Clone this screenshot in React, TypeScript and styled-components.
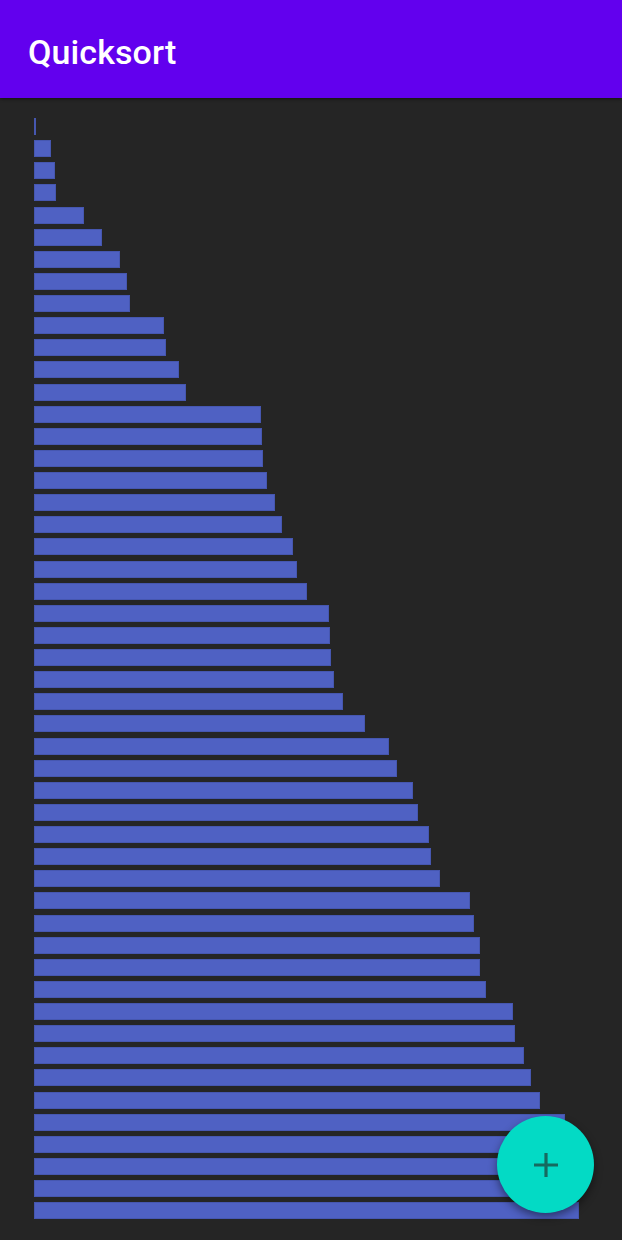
import * as React from 'react';
import styled, {createGlobalStyle} from 'styled-components';

// right edges of each bar, measured from the left edge of the chart
const values = [
    2, 17, 21, 22, 50, 68, 86, 93, 96, 130,
    132, 145, 152, 227, 228, 229, 233, 241, 248, 259,
    263, 273, 295, 296, 297, 300, 309, 331, 355, 363,
    379, 384, 395, 397, 406, 436, 440, 446, 446, 452,
    479, 481, 490, 497, 506, 531, 534, 538, 541, 545,
];

const GlobalStyle = createGlobalStyle`
  html, body {
    margin: 0;
    padding: 0;
    background: #252525;
  }

  body {
    font-family: Roboto, "Noto Sans", sans-serif;
  }
`;

const App = () => {
    return <Screen>
        <GlobalStyle/>
        <AppBar>
            <Title>Quicksort</Title>
        </AppBar>
        <Chart>
            {values.map((v, i) => <Bar key={i} style={{width: `${v}px`}}/>)}
        </Chart>
        <Fab type="button" aria-label="add">
            <svg width="26" height="26" viewBox="0 0 26 26">
                <path d="M13 1v24M1 13h24" stroke="#166a5f" strokeWidth="3.2" fill="none"/>
            </svg>
        </Fab>
    </Screen>
}

export default App;


const Screen = styled.div`
  position: relative;
  width: 622px;
  height: 1240px;
  background: #252525;
  overflow: hidden;
`;

const AppBar = styled.header`
  height: 98px;
  background: #6200ee;
  display: flex;
  align-items: center;
  padding: 0 28px;
  box-shadow: 0 1px 3px rgba(0, 0, 0, 0.5);
  position: relative;
  z-index: 1;
`;

const Title = styled.h1`
  margin: 6px 0 0;
  color: #fff;
  font-family: Roboto, "Noto Sans", sans-serif;
  font-weight: 500;
  font-size: 34px;
  letter-spacing: 0.1px;
`;

const Chart = styled.div`
  display: flex;
  flex-direction: column;
  gap: 5.14px;
  padding: 20px 0 0 34px;
`;

const Bar = styled.div`
  height: 17px;
  background: #4f61c3;
  box-shadow: inset 0 0 0 1px #4657b0;
`;

const Fab = styled.button`
  position: absolute;
  left: 497px;
  top: 1116px;
  width: 97px;
  height: 97px;
  border-radius: 50%;
  border: none;
  padding: 0;
  background: #03dac5;
  display: flex;
  align-items: center;
  justify-content: center;
  box-shadow: 0 4px 8px rgba(0, 0, 0, 0.45);
`;
